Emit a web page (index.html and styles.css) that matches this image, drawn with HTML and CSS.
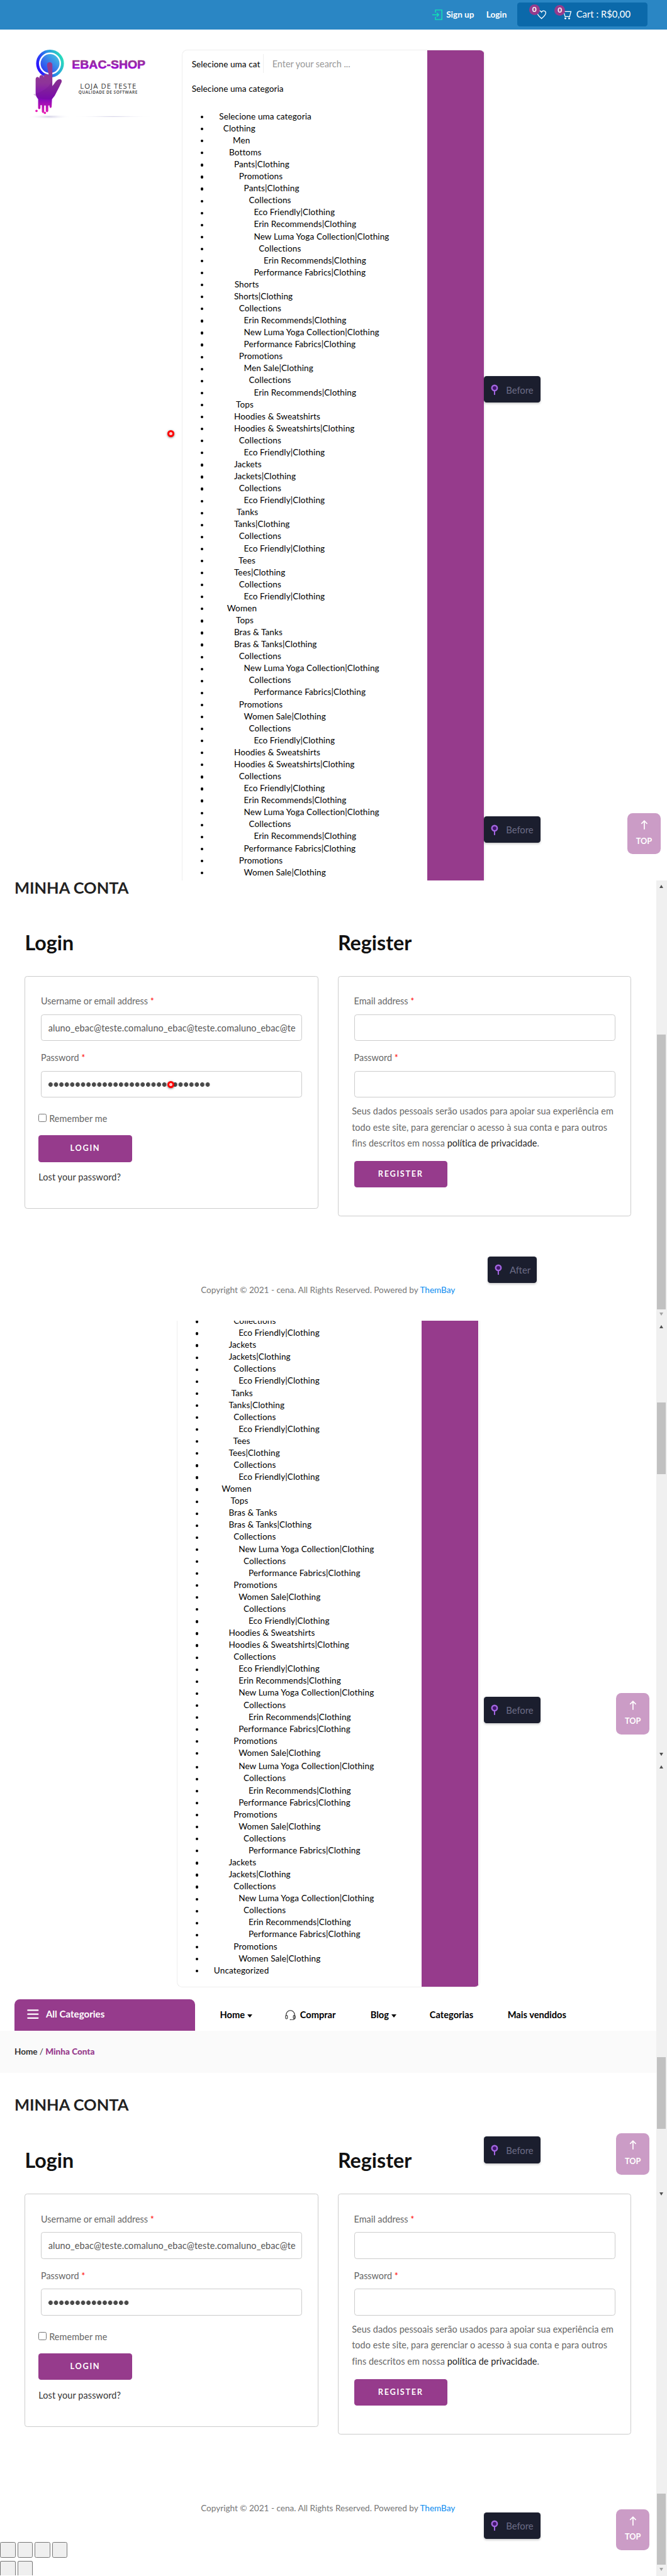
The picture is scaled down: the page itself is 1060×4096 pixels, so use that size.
FILE: index.html
```html
<!DOCTYPE html>
<html lang="pt-BR">
<head>
<meta charset="utf-8">
<title>Minha Conta - EBAC Shop</title>
<link rel="stylesheet" href="styles.css">
</head>
<body>
<svg class="sprite" aria-hidden="true">
  <symbol id="pin" viewBox="0 0 14 20"><path d="M7 12v7" stroke="#a366e0" stroke-width="2.4" stroke-linecap="round"/><circle cx="7" cy="7" r="5" fill="#43176e" stroke="#a366e0" stroke-width="2.8"/></symbol>
  <symbol id="up" viewBox="0 0 14 18"><path d="M7 17.500V2M1.500 7L7 1.500 12.500 7" fill="none" stroke="#fff" stroke-width="2"/></symbol>
</svg>
<section class="shot shot-home">
  <header class="topbar">
    <a class="signup"><svg width="19" height="20" viewBox="0 0 19 20" fill="none" stroke="#10e3b4" stroke-width="1.700"><path d="M6 6V1h12v18H6v-5M0 10h12M8.500 6.500L12 10l-3.500 3.500"/></svg>Sign up</a>
    <a class="login">Login</a>
    <div class="cartbox">
      <span class="ico heart"><svg width="18" height="17" viewBox="0 0 18 17"><path d="M9 16C4 11.500 1 8.500 1 5.200 1 1.200 6.500-.2 9 4c2.500-4.200 8-2.800 8 1.200C17 8.500 14 11.500 9 16z" fill="none" stroke="#fff" stroke-width="1.500"/></svg><b class="count">0</b></span>
      <span class="ico trolley"><svg width="18" height="17" viewBox="0 0 18 17"><path d="M0 1h3l3 10h8.500L17 1.500H4" fill="none" stroke="#fff" stroke-width="1.500"/><circle cx="6.500" cy="14.500" r="1.700" fill="#fff"/><circle cx="13.500" cy="14.500" r="1.700" fill="#fff"/></svg><b class="count">0</b></span>
      <span class="total">Cart : R$0,00</span>
    </div>
  </header>
  <div class="masthead">
    <svg class="logo" width="250" height="150" viewBox="0 0 750 450">
      <defs>
        <linearGradient id="ring" x1="0" y1=".7" x2="1" y2=".3"><stop offset="0" stop-color="#2a0cff"/><stop offset=".55" stop-color="#2a90e6"/><stop offset="1" stop-color="#28dcbc"/></linearGradient>
        <linearGradient id="disc" x1="0" y1="1" x2="1" y2="0"><stop offset="0" stop-color="#2a2cf5"/><stop offset="1" stop-color="#45cfe0"/></linearGradient>
        <linearGradient id="hand" gradientUnits="userSpaceOnUse" x1="0" y1="110" x2="0" y2="400"><stop offset="0" stop-color="#963b8c"/><stop offset=".4" stop-color="#8e3499"/><stop offset=".7" stop-color="#7f08b8"/><stop offset="1" stop-color="#e81cb4"/></linearGradient>
        <linearGradient id="word" gradientUnits="userSpaceOnUse" x1="0" y1="95" x2="0" y2="146"><stop offset="0" stop-color="#963b8c"/><stop offset="1" stop-color="#9a08d2"/></linearGradient>
        <radialGradient id="shade"><stop offset="0" stop-color="#cfcde4"/><stop offset="1" stop-color="#fff" stop-opacity="0"/></radialGradient>
      </defs>
      <ellipse cx="155" cy="416" rx="122" ry="13" fill="url(#shade)"/>
      <ellipse cx="515" cy="415" rx="225" ry="5" fill="url(#shade)"/>
      <circle cx="161" cy="117" r="70" fill="none" stroke="url(#ring)" stroke-width="16"/>
      <circle cx="161" cy="117" r="53" fill="url(#disc)"/>
      <path d="M144 126q0-16 15-16t15 16v118q10-12 18-24 12-16 26-15 11 3 8 16-14 30-27 54-10 25-27 42l-2 44q-6 12-12 0v-8h-7v32q-7 12-14 0v-32h-9v36q-6 12-13 0v-38h-8v18q-7 10-13 0v-52q-14-16-14-38v-75q2-12 12-12 8 2 8 10 0-20 13-21 12 1 12 14 0-19 13-20 11 1 16 10z" fill="url(#hand)"/>
      <path d="M67 290q40-8 75-35 30-25 30-60v49q10-12 18-24 12-16 26-15 11 3 8 16-14 30-27 54-10 25-27 42-60 10-103-27z" fill="#6c1484" opacity=".28"/>
      <circle cx="85" cy="383" r="6.500" fill="#e81cb4"/><circle cx="132" cy="394" r="6.500" fill="#e81cb4"/>
      <text x="284" y="145" class="logo-word" textLength="413" lengthAdjust="spacingAndGlyphs">EBAC-SHOP</text>
      <text x="330" y="258" class="logo-sub" textLength="315">LOJA DE TESTE</text>
      <text x="321" y="288" class="logo-tag" textLength="331">QUALIDADE DE SOFTWARE</text>
    </svg>
    <div class="search">
      <div class="search-body">
        <div class="search-row"><span class="select">Selecione uma cat</span><span class="query">Enter your search ...</span></div>
        <div class="chosen">Selecione uma categoria</div>
        <ul class="tree">
          <li>Selecione uma categoria</li>
          <li class="clothing">Clothing</li>
          <li class="men">Men</li>
          <li class="d2">Bottoms</li>
          <li class="d3">Pants|Clothing</li>
          <li class="d4">Promotions</li>
          <li class="d5">Pants|Clothing</li>
          <li class="d6">Collections</li>
          <li class="d7">Eco Friendly|Clothing</li>
          <li class="d7">Erin Recommends|Clothing</li>
          <li class="d7">New Luma Yoga Collection|Clothing</li>
          <li class="d8">Collections</li>
          <li class="d9">Erin Recommends|Clothing</li>
          <li class="d7">Performance Fabrics|Clothing</li>
          <li class="shorts">Shorts</li>
          <li class="d3">Shorts|Clothing</li>
          <li class="d4">Collections</li>
          <li class="d5">Erin Recommends|Clothing</li>
          <li class="d5">New Luma Yoga Collection|Clothing</li>
          <li class="d5">Performance Fabrics|Clothing</li>
          <li class="d4">Promotions</li>
          <li class="d5">Men Sale|Clothing</li>
          <li class="d6">Collections</li>
          <li class="d7">Erin Recommends|Clothing</li>
          <li class="tops">Tops</li>
          <li class="d3">Hoodies &amp; Sweatshirts</li>
          <li class="d3">Hoodies &amp; Sweatshirts|Clothing</li>
          <li class="d4">Collections</li>
          <li class="d5">Eco Friendly|Clothing</li>
          <li class="d3">Jackets</li>
          <li class="d3">Jackets|Clothing</li>
          <li class="d4">Collections</li>
          <li class="d5">Eco Friendly|Clothing</li>
          <li class="tanks">Tanks</li>
          <li class="d3">Tanks|Clothing</li>
          <li class="d4">Collections</li>
          <li class="d5">Eco Friendly|Clothing</li>
          <li class="tees">Tees</li>
          <li class="d3">Tees|Clothing</li>
          <li class="d4">Collections</li>
          <li class="d5">Eco Friendly|Clothing</li>
          <li class="women">Women</li>
          <li class="tops">Tops</li>
          <li class="d3">Bras &amp; Tanks</li>
          <li class="d3">Bras &amp; Tanks|Clothing</li>
          <li class="d4">Collections</li>
          <li class="d5">New Luma Yoga Collection|Clothing</li>
          <li class="d6">Collections</li>
          <li class="d7">Performance Fabrics|Clothing</li>
          <li class="d4">Promotions</li>
          <li class="d5">Women Sale|Clothing</li>
          <li class="d6">Collections</li>
          <li class="d7">Eco Friendly|Clothing</li>
          <li class="d3">Hoodies &amp; Sweatshirts</li>
          <li class="d3">Hoodies &amp; Sweatshirts|Clothing</li>
          <li class="d4">Collections</li>
          <li class="d5">Eco Friendly|Clothing</li>
          <li class="d5">Erin Recommends|Clothing</li>
          <li class="d5">New Luma Yoga Collection|Clothing</li>
          <li class="d6">Collections</li>
          <li class="d7">Erin Recommends|Clothing</li>
          <li class="d5">Performance Fabrics|Clothing</li>
          <li class="d4">Promotions</li>
          <li class="d5">Women Sale|Clothing</li>
        </ul>
      </div>
      <div class="search-btn"></div>
    </div>
  </div>
  <i class="click click-a"></i>
  <div class="step step-a"><svg><use href="#pin"/></svg>Before</div>
  <div class="step step-b"><svg><use href="#pin"/></svg>Before</div>
  <div class="totop top-a"><svg><use href="#up"/></svg>TOP</div>
</section>

<section class="shot shot-account">
  <div class="content">
    <h1 class="title">MINHA CONTA</h1>
    <div class="forms">
      <div class="col">
        <h2>Login</h2>
        <form class="card card-login">
          <label>Username or email address <em>*</em></label>
          <div class="field">aluno_ebac@teste.comaluno_ebac@teste.comaluno_ebac@te</div>
          <label>Password <em>*</em></label>
          <div class="field dots dots-long"></div>
          <div class="remember"><span class="box"></span>Remember me</div>
          <div class="btn">LOGIN</div>
          <a class="lost">Lost your password?</a>
        </form>
      </div>
      <div class="col">
        <h2>Register</h2>
        <form class="card card-register">
          <label>Email address <em>*</em></label>
          <div class="field"></div>
          <label>Password <em>*</em></label>
          <div class="field"></div>
          <p>Seus dados pessoais serão usados para apoiar sua experiência em<br>todo este site, para gerenciar o acesso à sua conta e para outros<br>fins descritos em nossa <a>política de privacidade</a>.</p>
          <div class="btn">REGISTER</div>
        </form>
      </div>
    </div>
    <footer>Copyright © 2021 - cena. All Rights Reserved. Powered by <a>ThemBay</a></footer>
  </div>
  <div class="bar"><i class="arrow-up"></i><i class="thumb thumb-a"></i><i class="arrow-down off"></i></div>
  <i class="click click-b"></i>
  <div class="step step-after"><svg><use href="#pin"/></svg>After</div>
</section>

<section class="shot shot-list">
  <div class="content">
    <div class="search">
      <div class="search-body">
        <ul class="tree">
          <li class="d4">Collections</li>
          <li class="d5">Eco Friendly|Clothing</li>
          <li class="d3">Jackets</li>
          <li class="d3">Jackets|Clothing</li>
          <li class="d4">Collections</li>
          <li class="d5">Eco Friendly|Clothing</li>
          <li class="tanks">Tanks</li>
          <li class="d3">Tanks|Clothing</li>
          <li class="d4">Collections</li>
          <li class="d5">Eco Friendly|Clothing</li>
          <li class="tees">Tees</li>
          <li class="d3">Tees|Clothing</li>
          <li class="d4">Collections</li>
          <li class="d5">Eco Friendly|Clothing</li>
          <li class="women">Women</li>
          <li class="tops">Tops</li>
          <li class="d3">Bras &amp; Tanks</li>
          <li class="d3">Bras &amp; Tanks|Clothing</li>
          <li class="d4">Collections</li>
          <li class="d5">New Luma Yoga Collection|Clothing</li>
          <li class="d6">Collections</li>
          <li class="d7">Performance Fabrics|Clothing</li>
          <li class="d4">Promotions</li>
          <li class="d5">Women Sale|Clothing</li>
          <li class="d6">Collections</li>
          <li class="d7">Eco Friendly|Clothing</li>
          <li class="d3">Hoodies &amp; Sweatshirts</li>
          <li class="d3">Hoodies &amp; Sweatshirts|Clothing</li>
          <li class="d4">Collections</li>
          <li class="d5">Eco Friendly|Clothing</li>
          <li class="d5">Erin Recommends|Clothing</li>
          <li class="d5">New Luma Yoga Collection|Clothing</li>
          <li class="d6">Collections</li>
          <li class="d7">Erin Recommends|Clothing</li>
          <li class="d5">Performance Fabrics|Clothing</li>
          <li class="d4">Promotions</li>
          <li class="d5">Women Sale|Clothing</li>
        </ul>
      </div>
      <div class="search-btn"></div>
    </div>
  </div>
  <div class="bar"><i class="arrow-up"></i><i class="thumb thumb-b"></i><i class="arrow-down"></i></div>
  <div class="step step-c"><svg><use href="#pin"/></svg>Before</div>
  <div class="totop top-c"><svg><use href="#up"/></svg>TOP</div>
</section>

<section class="shot shot-end">
  <div class="content">
    <div class="search search-end">
      <div class="search-body">
        <ul class="tree">
          <li class="d5">New Luma Yoga Collection|Clothing</li>
          <li class="d6">Collections</li>
          <li class="d7">Erin Recommends|Clothing</li>
          <li class="d5">Performance Fabrics|Clothing</li>
          <li class="d4">Promotions</li>
          <li class="d5">Women Sale|Clothing</li>
          <li class="d6">Collections</li>
          <li class="d7">Performance Fabrics|Clothing</li>
          <li class="d3">Jackets</li>
          <li class="d3">Jackets|Clothing</li>
          <li class="d4">Collections</li>
          <li class="d5">New Luma Yoga Collection|Clothing</li>
          <li class="d6">Collections</li>
          <li class="d7">Erin Recommends|Clothing</li>
          <li class="d7">Performance Fabrics|Clothing</li>
          <li class="d4">Promotions</li>
          <li class="d5">Women Sale|Clothing</li>
          <li>Uncategorized</li>
        </ul>
      </div>
      <div class="search-btn"></div>
    </div>
    <nav class="nav">
      <div class="all"><svg width="22" height="18" viewBox="0 0 22 18"><path d="M1.500 1.700h19M1.500 9h19M1.500 16.300h19" stroke="#fff" stroke-width="2.600" stroke-linecap="round"/></svg>All Categories</div>
      <a class="n1">Home<i class="caret"></i></a>
      <a class="n2"><svg width="20" height="20" viewBox="0 0 20 20" fill="none" stroke="#222" stroke-width="1.200"><path d="M2 11V9a8 8 0 0 1 16 0v6q0 3-4 3.500h-2"/><rect x="1" y="10" width="3.500" height="6.500" rx="1.500"/><rect x="15.500" y="10" width="3.500" height="6.500" rx="1.500"/><path d="M9 18.700h3" stroke-width="2"/></svg>Comprar</a>
      <a class="n3">Blog<i class="caret"></i></a>
      <a class="n4">Categorias</a>
      <a class="n5">Mais vendidos</a>
    </nav>
    <div class="crumbs">Home <i>/</i> <b>Minha Conta</b></div>
    <h1 class="title">MINHA CONTA</h1>
    <div class="forms">
      <div class="col">
        <h2>Login</h2>
        <form class="card card-login">
          <label>Username or email address <em>*</em></label>
          <div class="field">aluno_ebac@teste.comaluno_ebac@teste.comaluno_ebac@te</div>
          <label>Password <em>*</em></label>
          <div class="field dots dots-short"></div>
          <div class="remember"><span class="box"></span>Remember me</div>
          <div class="btn">LOGIN</div>
          <a class="lost">Lost your password?</a>
        </form>
      </div>
      <div class="col">
        <h2>Register</h2>
        <form class="card card-register">
          <label>Email address <em>*</em></label>
          <div class="field"></div>
          <label>Password <em>*</em></label>
          <div class="field"></div>
          <p>Seus dados pessoais serão usados para apoiar sua experiência em<br>todo este site, para gerenciar o acesso à sua conta e para outros<br>fins descritos em nossa <a>política de privacidade</a>.</p>
          <div class="btn">REGISTER</div>
        </form>
      </div>
    </div>
    <footer>Copyright © 2021 - cena. All Rights Reserved. Powered by <a>ThemBay</a></footer>
    <div class="blanks">
      <div><i></i><i></i><i></i><i></i></div>
      <div class="cut"><i></i><i></i></div>
    </div>
  </div>
  <div class="bar"><i class="arrow-up"></i><i class="thumb thumb-c"></i><i class="arrow-down mid"></i><i class="thumb thumb-d"></i><i class="arrow-down off"></i></div>
  <div class="step step-d"><svg><use href="#pin"/></svg>Before</div>
  <div class="step step-e"><svg><use href="#pin"/></svg>Before</div>
  <div class="totop top-d"><svg><use href="#up"/></svg>TOP</div>
  <div class="totop top-e"><svg><use href="#up"/></svg>TOP</div>
</section>
</body>
</html>
```

FILE: styles.css
```css
* { box-sizing: border-box; }
html { overflow: hidden; background: #fff; }
body { margin: 0; zoom: 0.8483; font: 16px/22.5px Lato, sans-serif; color: #000; }
.sprite { display: none; }
i { font-style: normal; }
.shot { position: relative; overflow: hidden; display: flex; }
.shot-home { height: 1650px; flex-direction: column; }
.shot-account, .shot-list { height: 825px; }
.shot-end { height: 1528px; }
.content { width: 1229px; flex: none; background: #fff; }

/* top bar */
.topbar { height: 55px; flex: none; background: #2a86c4; color: #fff; display: flex; align-items: center; padding-left: 810px; font-weight: 700; }
.signup { display: flex; align-items: center; gap: 7px; width: 101px; }
.login { width: 58px; }
.cartbox { width: 244px; height: 44px; margin-bottom: 1px; border-radius: 5px; background: #0b69aa; display: flex; align-items: center; padding-left: 37px; font-weight: 400; }
.ico { position: relative; display: flex; width: 48px; }
.ico svg { overflow: visible; }
.trolley { width: 26.500px; margin-left: -1px; margin-top: 3px; }
.total { font-size: 17.500px; white-space: nowrap; }
.count { position: absolute; left: -15px; top: -10px; width: 20px; height: 20px; border-radius: 50%; background: #963b8c; text-align: center; line-height: 20px; font-size: 14px; }
.trolley .count { left: -14px; top: -11px; }

/* logo and search */
.masthead { display: flex; height: 1595px; align-items: flex-start; }
.logo { margin: 25px 51px 0 40px; flex: none; }
.logo-word { font: 700 68px "Liberation Sans", sans-serif; fill: url(#word); stroke: url(#word); stroke-width: 2px; }
.logo-sub { font: 40px "Open Sans", "Noto Sans", sans-serif; fill: #333; }
.logo-tag { font: 600 23px "Open Sans", "Noto Sans", sans-serif; fill: #333; }
.search { width: 568px; border: 2px solid #eee; display: flex; overflow: hidden; flex: none; }
.shot-home .search { margin-top: 38px; height: 1557px; border-bottom: 0; border-radius: 10px 10px 0 0; }
.search-body { width: 458px; }
.search-btn { width: 106px; background: #963b8c; }
.search-row { display: flex; margin-top: 7px; height: 36px; line-height: 38px; }
.select { width: 152px; padding-left: 17px; border-right: 1px solid #eee; white-space: nowrap; overflow: hidden; letter-spacing: .1px; }
.query { padding-left: 16px; font-size: 17px; color: #999; }
.chosen { margin: 18px 0 0 17px; letter-spacing: .1px; }
.tree { list-style: none; margin: 0; padding: 0; letter-spacing: .13px; }
.chosen + .tree { margin-top: 29.500px; }
.tree li { display: flex; align-items: center; height: 22.500px; white-space: nowrap; }
.tree li::before { content: ""; width: 5px; height: 5px; border-radius: 50%; background: #000; margin: 2px 29.500px 0 34px; flex: none; }
.tree .clothing::before { margin-right: 37.200px; }
.tree .women::before { margin-right: 44.100px; }
.tree .d2::before { margin-right: 48px; }
.tree .men::before { margin-right: 55.100px; }
.tree .d3::before { margin-right: 57.300px; }
.tree .shorts::before { margin-right: 58.300px; }
.tree .tops::before { margin-right: 60.900px; }
.tree .tanks::before { margin-right: 62.200px; }
.tree .tees::before { margin-right: 65.700px; }
.tree .d4::before { margin-right: 66.600px; }
.tree .d5::before { margin-right: 75.800px; }
.tree .d6::before { margin-right: 85.100px; }
.tree .d7::before { margin-right: 94.400px; }
.tree .d8::before { margin-right: 103.700px; }
.tree .d9::before { margin-right: 112.900px; }
.content > .search { margin-left: 331px; }
.shot-list .search { height: 825px; border-width: 0 2px; }
.shot-list .tree { margin-top: -10px; }
.search-end { height: 425px; border-width: 0 2px 2px; border-radius: 0 0 10px 10px; }

/* navigation */
.nav { display: flex; align-items: center; height: 60px; margin-top: 22px; padding-left: 27px; font-weight: 700; font-size: 17.300px; white-space: nowrap; }
.nav a { display: flex; align-items: center; }
.nav .all { width: 338px; height: 59px; align-self: flex-start; border-radius: 10px 10px 0 0; background: #963b8c; color: #fff; display: flex; align-items: center; gap: 13px; padding: 0 0 2px 24px; font-size: 17.800px; margin-right: 47px; }
.caret { border: 5px solid transparent; border-top: 6px solid #000; border-bottom: 0; margin: 3px 0 0 5px; }
.nav .n1 { width: 122px; }
.nav .n2 { width: 160px; gap: 8px; }
.nav .n3 { width: 111px; }
.nav .n4 { width: 146px; }
.crumbs { height: 78px; background: #fafafa; padding-left: 27px; line-height: 80px; font-weight: 700; color: #333; }
.crumbs i { font-weight: 400; }
.crumbs b { color: #963b8c; }

/* account page */
.title { margin: 0 0 0 27px; font-size: 30px; line-height: 26px; height: 31px; font-weight: 700; color: #222; }
.shot-end .title { margin-top: 47px; }
.forms { display: flex; gap: 37px; padding-left: 46.500px; align-items: flex-start; height: 600px; }
.col { width: 549.500px; }
h2 { margin: 63px 0 0; height: 85px; font-size: 38px; line-height: 48px; font-weight: 700; color: #111; }
.card { border: 1px solid #ccc; border-radius: 5px; padding: 35px 29px 0; font-size: 17px; color: #666; }
.shot-end .card { margin-top: 1px; }
.card-login { height: 437px; }
.card-register { height: 451px; }
.card label { display: block; height: 36px; line-height: 24px; }
.card em { color: #f00; font-style: normal; }
.card .field + label { margin-top: 20px; }
.field { height: 50px; border: 1px solid #ccc; border-radius: 5px; padding: 0 12.500px; line-height: 49px; font-size: 17px; letter-spacing: .16px; color: #555; overflow: hidden; white-space: nowrap; }
.dots::before { content: ""; display: block; height: 8px; margin-top: 21px; background: radial-gradient(circle at 4px 4px, #4b4b4b 3.700px, transparent 4.300px) 0 0 / 10.150px 8px; }
.dots-long::before { width: 304px; }
.dots-short::before { width: 152px; }
.remember { display: flex; align-items: center; gap: 5px; margin: 28px 0 0 -4.500px; height: 24px; letter-spacing: .1px; }
.box { width: 15px; height: 15px; border: 1px solid #767676; border-radius: 3px; margin-top: -3px; }
.btn { width: 175px; height: 50px; border-radius: 5px; background: #963b8c; color: #fff; font-weight: 700; font-size: 15px; letter-spacing: 2px; line-height: 49px; text-align: center; }
.remember + .btn { margin: 19px 0 0 -4.500px; }
.lost { display: block; margin: 17px 0 0 -4.500px; line-height: 24px; letter-spacing: .15px; color: #333; }
.card p { margin: 11px -20px 0 -4px; line-height: 30px; letter-spacing: .08px; white-space: nowrap; }
.card p a { color: #222; }
.card p + .btn { margin-top: 18px; }
footer { text-align: center; margin-top: 127px; font-size: 16px; line-height: 24px; color: #777; }
footer a { color: #0c8cf0; }
.shot-account footer { margin-top: 125px; }
.blanks { margin-top: 51px; display: flex; flex-direction: column; gap: 6px; }
.blanks div { display: flex; gap: 3.500px; }
.blanks i { width: 29px; height: 29px; border: 1px solid #767676; border-radius: 3px; background: #efefef; }
.blanks .cut i { height: 27px; border-bottom: 0; border-radius: 3px 3px 0 0; }

/* scrollbars */
.bar { flex: 1; min-width: 0; background: #f0f0f0; display: flex; flex-direction: column; align-items: center; padding-top: 9px; }
.bar i { flex: none; margin-right: 1px; }
.arrow-up { border: 4.500px solid transparent; border-top: 0; border-bottom: 6px solid #505050; }
.arrow-down { border: 4.500px solid transparent; border-bottom: 0; border-top: 6px solid #505050; }
.arrow-down.off { border-top-color: #a3a3a3; }
.thumb { width: 17px; background: #c1c1c1; }
.thumb-a { margin-top: 274px; height: 515px; }
.thumb-a + .arrow-down { margin-top: 6px; }
.thumb-b { margin-top: 139px; height: 134px; }
.thumb-b + .arrow-down { margin-top: 522px; }
.thumb-c { margin-top: 541px; height: 134px; }
.thumb-c + .arrow-down { margin-top: 120px; }
.thumb-d { margin-top: 558px; height: 134px; }
.thumb-d + .arrow-down { margin-top: 6px; }

/* floating markers over the captures */
.step { position: absolute; left: 907px; width: 106px; height: 50px; border-radius: 5px; background: #1b1e2e; color: #6b6c86; font-size: 17.500px; display: flex; align-items: center; gap: 14px; padding: 2px 0 0 13px; box-shadow: 0 2px 4px rgba(0, 0, 0, .2); }
.step svg { width: 14px; height: 20px; margin-top: -2px; }
.step-a { top: 705px; }
.step-b { top: 1530px; }
.step-c { top: 705px; }
.step-d { top: 705px; }
.step-e { top: 1409px; }
.step-after { left: 914px; width: 92px; top: 705px; }
.totop { position: absolute; left: 1154px; width: 63px; height: 77px; border-radius: 10px; background: #cb9cc6; color: #fff; font-weight: 700; font-size: 15px; display: flex; flex-direction: column; align-items: center; padding-top: 13px; gap: 10px; }
.totop svg { width: 14px; height: 18px; }
.top-a { left: 1175px; top: 1524px; }
.top-c { top: 699px; }
.top-d { top: 699px; }
.top-e { top: 1403px; }
.click { position: absolute; left: 313.500px; width: 13px; height: 13px; border: 4px solid #f00; border-radius: 50%; background: #fcc; box-shadow: 0 1px 4px rgba(0, 0, 0, .6); }
.click-a { top: 806px; }
.click-b { top: 376px; }
```
